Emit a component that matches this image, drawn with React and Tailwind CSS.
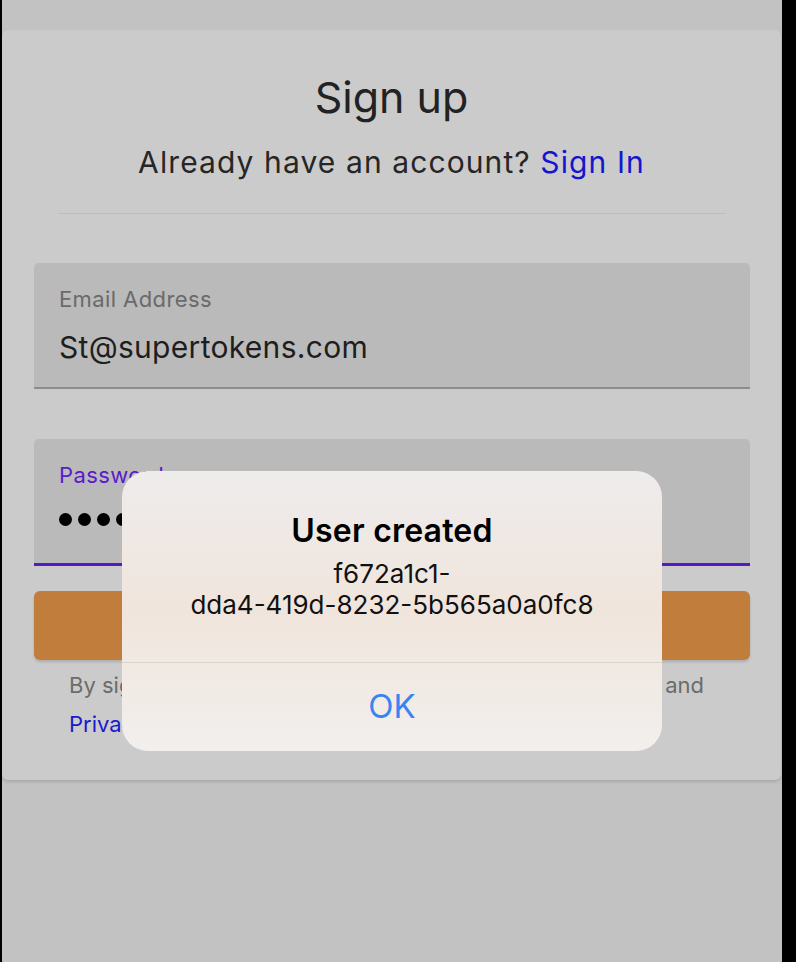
import React from 'react';

const font = { fontFamily: 'Inter, "Noto Sans", sans-serif' };

const SignUpCard = () => (
  <div className="mt-[30px] mr-[1px] bg-[#cbcbcb] rounded-[6px] shadow-[0_2px_3px_rgba(0,0,0,0.12)] pt-[41px] pb-[36px]">
    <h1 className="text-center text-[43px] leading-[52px] text-[#222] font-normal">Sign up</h1>
    <p className="mt-[21px] text-center text-[30px] leading-[36px] tracking-[1.1px] text-[#262626]">
      Already have an account? <span className="text-[#1515cf]">Sign In</span>
    </p>
    <div className="mt-[33px] mx-[56px] mr-[55px] h-px bg-[#bdbdbd]" />

    <div className="mt-[49px] pl-[32px] pr-[31px]">
      {/* Email field */}
      <div className="bg-[#bababa] rounded-t-[5px] border-b-2 border-[#8c8c8c] pt-[23px] pb-[22px] px-[25px]">
        <div className="text-[22px] leading-[26px] tracking-[0.4px] text-[#6a6a6a]">Email Address</div>
        <div className="mt-[17px] text-[30px] leading-[36px] tracking-[0.3px] text-[#1e1e1e]">St@supertokens.com</div>
      </div>

      {/* Password field */}
      <div className="mt-[50px] bg-[#bababa] rounded-t-[5px] border-b-[3px] border-[#521bc8] pt-[23px] pb-[35px] px-[25px]">
        <div className="text-[22px] leading-[26px] tracking-[0.4px] text-[#5a1bcc]">Password</div>
        <div className="mt-[22px] flex gap-[6px] h-[18px] items-center">
          {Array.from({ length: 10 }).map((_, i) => (
            <span key={i} className="w-[13px] h-[13px] rounded-full bg-black" />
          ))}
        </div>
      </div>

      <button className="mt-[25px] w-full h-[69px] rounded-[6px] bg-[#c17d3c] shadow-[0_2px_3px_rgba(0,0,0,0.15)] text-white text-[26px]">
        SIGN UP
      </button>

      <div className="mt-[6px] pl-[35px] pr-[46px] text-[22px] leading-[39px] text-[#6b6b6b]">
        <div className="flex justify-between">
          <span>By signing up, you agree to our</span>
          <span>Terms of Service and</span>
        </div>
        <div className="text-[#1a1acc]">Privacy Policy</div>
      </div>
    </div>
  </div>
);

const AlertDialog = () => (
  <div className="absolute left-[120px] top-[471px] w-[540px] h-[280px] rounded-[26px] bg-gradient-to-b from-[#eeecec] via-[#f0e5dc] to-[#f2efed] flex flex-col">
    <div className="pt-[41px] pb-[42px] text-center text-black">
      <div className="text-[32px] leading-[38px] font-semibold tracking-[0.2px]">User created</div>
      <div className="mt-[8px] text-[26px] leading-[31px] text-[#111]">
        f672a1c1-
        <br />
        dda4-419d-8232-5b565a0a0fc8
      </div>
    </div>
    <div className="h-px bg-[#dcd3cc]" />
    <div className="flex-1 flex items-center justify-center text-[33px] text-[#3a84f2]">OK</div>
  </div>
);

export default function App() {
  return (
    <div className="w-[796px] h-[962px] bg-black flex overflow-hidden" style={font}>
      <div className="relative ml-[2px] w-[780px] h-full bg-[#c2c2c2]">
        <SignUpCard />
        <AlertDialog />
      </div>
    </div>
  );
}
